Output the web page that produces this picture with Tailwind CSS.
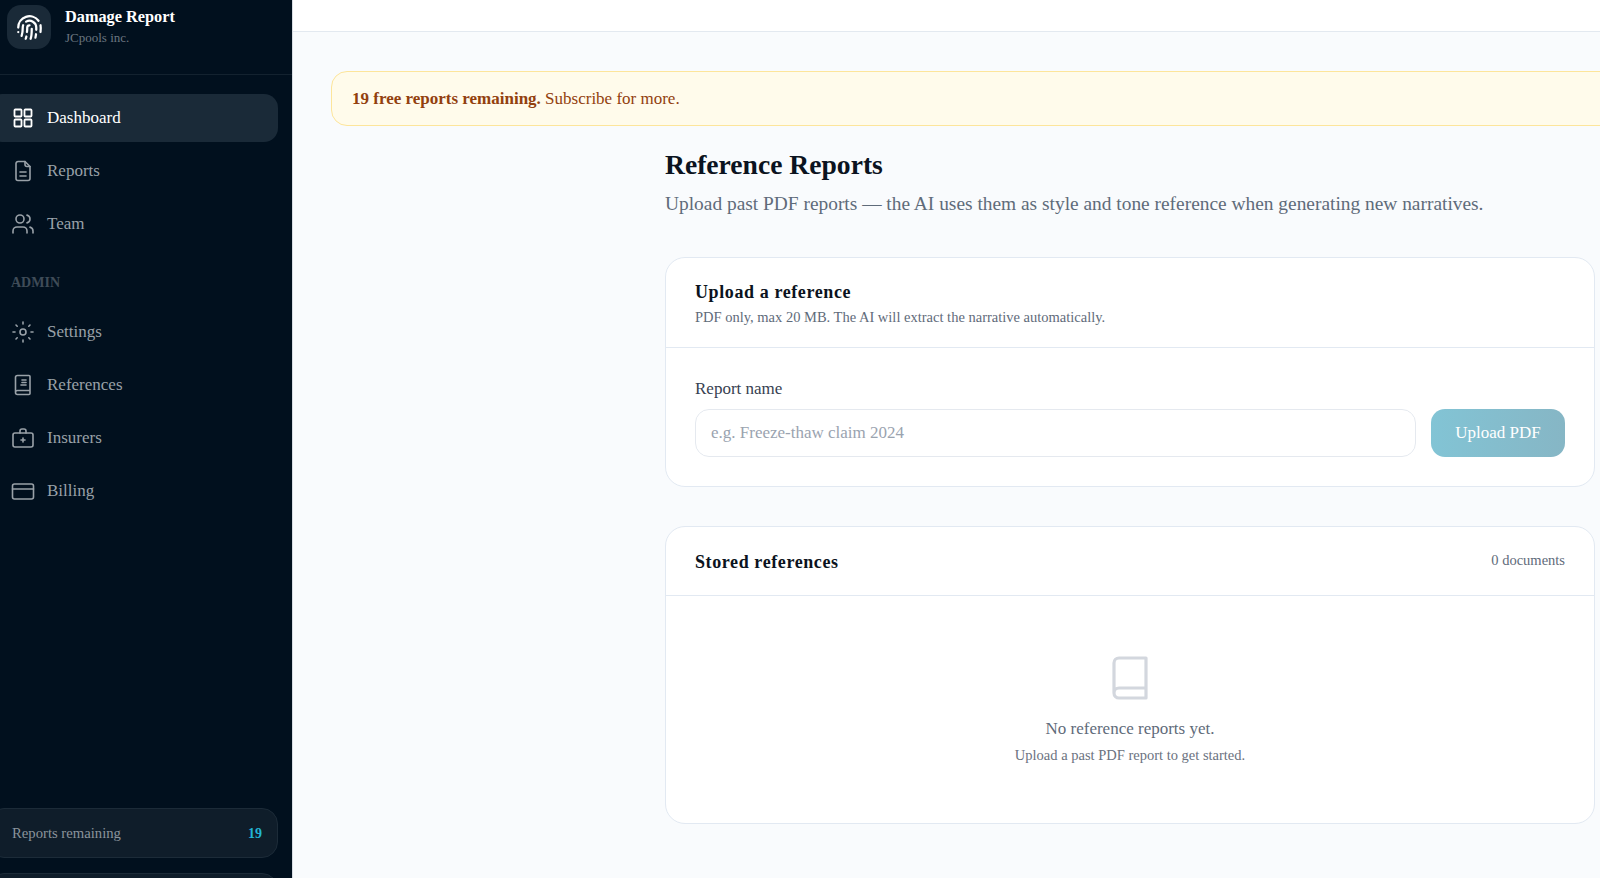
<!DOCTYPE html>
<html lang="en">
<head>
    <meta charset="UTF-8">
    <meta name="viewport" content="width=device-width, initial-scale=1.0">
    <title>Reference Reports - Damage Report</title>
    <script src="https://cdn.jsdelivr.net/npm/@tailwindcss/browser@4"></script>
</head>
<body class="h-screen overflow-hidden bg-[#f9fbfd] font-['Liberation_Serif',serif] flex">
    <!-- sidebar -->
    <aside class="w-[293px] h-[878px] shrink-0 bg-[#01101e] overflow-hidden flex flex-col border-r border-[#d8dde3]">
        <div class="h-[75px] shrink-0 border-b border-[#13222f] pl-[7px] pt-[5px] flex gap-[14px]">
            <div class="w-[44px] h-[44px] rounded-[14px] bg-[#1a2a38] flex items-center justify-center">
                <svg class="w-[27px] h-[27px] text-white" viewBox="0 0 24 24" fill="none" stroke="currentColor" stroke-width="2" stroke-linecap="round" stroke-linejoin="round"><path d="M12 10a2 2 0 0 0-2 2c0 1.02-.1 2.51-.26 4"/><path d="M14 13.12c0 2.38 0 6.38-1 8.88"/><path d="M17.29 21.02c.12-.6.43-2.3.5-3.02"/><path d="M2 12a10 10 0 0 1 18-6"/><path d="M2 16h.01"/><path d="M21.8 16c.2-2 .131-5.354 0-6"/><path d="M5 19.5C5.5 18 6 15 6 12a6 6 0 0 1 .34-2"/><path d="M8.65 22c.21-.66.45-1.32.57-2"/><path d="M9 6.8a6 6 0 0 1 9 5.2v2"/></svg>
            </div>
            <div>
                <div class="text-[16.3px] leading-[24px] font-bold text-white">Damage Report</div>
                <div class="text-[13px] leading-[18px] text-[#6b7680]">JCpools inc.</div>
            </div>
        </div>

        <nav class="h-[733px] shrink-0 pr-[14px] pt-[19px] text-[17px]">
            <a class="h-[48px] -ml-3 pl-[22.5px] rounded-[14px] bg-[#1a2a38] text-white flex items-center gap-[12.5px]">
                <svg class="w-[24px] h-[24px] shrink-0" viewBox="0 0 24 24" fill="none" stroke="currentColor" stroke-width="1.8"><rect x="3.5" y="3.5" width="7" height="7" rx="0.8"/><rect x="13.5" y="3.5" width="7" height="7" rx="0.8"/><rect x="3.5" y="13.5" width="7" height="7" rx="0.8"/><rect x="13.5" y="13.5" width="7" height="7" rx="0.8"/></svg>
                Dashboard
            </a>
            <a class="h-[48px] mt-[5px] -ml-3 pl-[22.5px] text-[#99a1a8] flex items-center gap-[12.5px]">
                <svg class="w-[24px] h-[24px] shrink-0" viewBox="0 0 24 24" fill="none" stroke="currentColor" stroke-width="1.6" stroke-linecap="round" stroke-linejoin="round"><path d="M14 2.5H7a2 2 0 0 0-2 2v15a2 2 0 0 0 2 2h10a2 2 0 0 0 2-2V7.5Z"/><path d="M14 2.5v3a2 2 0 0 0 2 2h3"/><path d="M9 13h6"/><path d="M9 17h6"/></svg>
                Reports
            </a>
            <a class="h-[48px] mt-[5px] -ml-3 pl-[22.5px] text-[#99a1a8] flex items-center gap-[12.5px]">
                <svg class="w-[24px] h-[24px] shrink-0" viewBox="0 0 24 24" fill="none" stroke="currentColor" stroke-width="1.6" stroke-linecap="round" stroke-linejoin="round"><path d="M16 21v-2a4 4 0 0 0-4-4H6a4 4 0 0 0-4 4v2"/><circle cx="9" cy="7" r="4"/><path d="M22 21v-2a4 4 0 0 0-3-3.87"/><path d="M16 3.13a4 4 0 0 1 0 7.75"/></svg>
                Team
            </a>
            <div class="h-[60px] pl-[11px] pt-[26px] text-[14px] leading-[18px] font-bold text-[#3f4c58]">ADMIN</div>
            <a class="h-[48px] -ml-3 pl-[22.5px] text-[#99a1a8] flex items-center gap-[12.5px]">
                <svg class="w-[24px] h-[24px] shrink-0" viewBox="0 0 24 24" fill="none" stroke="currentColor" stroke-width="1.6" stroke-linecap="round" stroke-linejoin="round"><circle cx="12" cy="12" r="3"/><path d="M12 2v2"/><path d="M12 20v2"/><path d="m5 5 1.2 1.2"/><path d="m17.8 17.8 1.2 1.2"/><path d="M2 12h2"/><path d="M20 12h2"/><path d="m6.2 17.8-1.2 1.2"/><path d="m19 5-1.2 1.2"/></svg>
                Settings
            </a>
            <a class="h-[48px] mt-[5px] -ml-3 pl-[22.5px] text-[#99a1a8] flex items-center gap-[12.5px]">
                <svg class="w-[24px] h-[24px] shrink-0" viewBox="0 0 24 24" fill="none" stroke="currentColor" stroke-width="1.6" stroke-linecap="round" stroke-linejoin="round"><path d="M4.500 19.500v-15A2 2 0 0 1 6.500 2.500H18a1 1 0 0 1 1 1v17a1 1 0 0 1-1 1H6.500a2 2 0 0 1 0-4H19"/><path d="M10 12h5"/><path d="M11 9.500h4"/><path d="M11 7h4"/></svg>
                References
            </a>
            <a class="h-[48px] mt-[5px] -ml-3 pl-[22.5px] text-[#99a1a8] flex items-center gap-[12.5px]">
                <svg class="w-[24px] h-[24px] shrink-0" viewBox="0 0 24 24" fill="none" stroke="currentColor" stroke-width="1.6" stroke-linecap="round" stroke-linejoin="round"><rect x="2" y="7" width="20" height="14" rx="2"/><path d="M9 7V5a2 2 0 0 1 2-2h2a2 2 0 0 1 2 2v2"/><path d="M12 12v4"/><path d="M10 14h4"/></svg>
                Insurers
            </a>
            <a class="h-[48px] mt-[5px] -ml-3 pl-[22.5px] text-[#99a1a8] flex items-center gap-[12.5px]">
                <svg class="w-[24px] h-[24px] shrink-0" viewBox="0 0 24 24" fill="none" stroke="currentColor" stroke-width="1.6" stroke-linecap="round" stroke-linejoin="round"><rect x="1.500" y="5" width="21" height="15" rx="2"/><path d="M1.500 10h21"/></svg>
                Billing
            </a>
        </nav>

        <div class="shrink-0 h-[50px] mr-[14px] -ml-3 pl-[23px] pr-[15px] rounded-[16px] border border-[#1c2b38] bg-[#0f1d2a] flex items-center justify-between">
            <span class="text-[14.7px] text-[#8b949c]">Reports remaining</span>
            <span class="text-[14px] font-bold text-[#22b4d6]">19</span>
        </div>
        <div class="shrink-0 h-[50px] mt-[15px] mr-[14px] -ml-3 rounded-[16px] border border-[#1c2b38] bg-[#0f1d2a]"></div>
    </aside>

    <!-- main -->
    <main class="flex-1 min-w-0">
        <div class="h-[32px] bg-white border-b border-[#e3e9f0]"></div>

        <div class="mt-[39px] ml-[38px] -mr-10 h-[55px] rounded-[16px] border border-[#fde59b] bg-[#fffbeb] pl-[20px] flex items-center text-[17px] text-[#92400e]">
            <p><strong class="font-bold">19 free reports remaining.</strong> Subscribe for more.</p>
        </div>

        <div class="ml-[372px] w-[930px]">
            <h1 class="mt-[21px] text-[27.6px] leading-[36px] font-bold text-[#0b1320]">Reference Reports</h1>
            <p class="mt-[7px] text-[19.4px] leading-[28px] text-[#5f6b7a]">Upload past PDF reports — the AI uses them as style and tone reference when generating new narratives.</p>

            <section class="mt-[39px] h-[230px] rounded-[20px] border border-[#e2e9f2] bg-white overflow-hidden">
                <div class="h-[90px] px-[29px] pt-[22px] border-b border-[#e2e9f2]">
                    <h2 class="text-[18px] leading-[24px] font-bold tracking-[0.6px] text-[#0b1320]">Upload a reference</h2>
                    <p class="mt-[3px] text-[14.5px] leading-[20px] text-[#5f6b7a]">PDF only, max 20 MB. The AI will extract the narrative automatically.</p>
                </div>
                <div class="px-[29px] pt-[29px]">
                    <label class="block text-[17px] leading-[24px] text-[#374151]">Report name</label>
                    <div class="mt-[8px] flex gap-[15px]">
                        <input class="flex-1 h-[48px] rounded-[14px] border border-[#e5e9ef] bg-white px-[15px] text-[17px] placeholder:text-[#9aa3af]" placeholder="e.g. Freeze-thaw claim 2024">
                        <button class="w-[134px] h-[48px] rounded-[14px] bg-gradient-to-r from-[#82c4d5] to-[#86b6c5] text-white text-[17px] font-medium">Upload PDF</button>
                    </div>
                </div>
            </section>

            <section class="mt-[39px] h-[298px] rounded-[20px] border border-[#e2e9f2] bg-white overflow-hidden">
                <div class="h-[69px] px-[29px] border-b border-[#e2e9f2] flex items-center justify-between">
                    <h2 class="mt-[2px] text-[18px] font-bold tracking-[0.6px] text-[#0b1320]">Stored references</h2>
                    <span class="text-[14.5px] text-[#5f6b7a]">0 documents</span>
                </div>
                <div class="pt-[58px] flex flex-col items-center">
                    <svg class="w-[48px] h-[48px] text-[#d3d7de]" viewBox="0 0 24 24" fill="none" stroke="currentColor" stroke-width="1.6" stroke-linejoin="round"><path d="M4 19.500v-15A2.500 2.500 0 0 1 6.500 2H20v20H6.500a2.500 2.500 0 0 1 0-5H20"/></svg>
                    <p class="mt-[14px] text-[17px] leading-[26px] text-[#5f6b7a]">No reference reports yet.</p>
                    <p class="text-[14.5px] leading-[26px] text-[#6b7280]">Upload a past PDF report to get started.</p>
                </div>
            </section>
        </div>
    </main>
</body>
</html>
